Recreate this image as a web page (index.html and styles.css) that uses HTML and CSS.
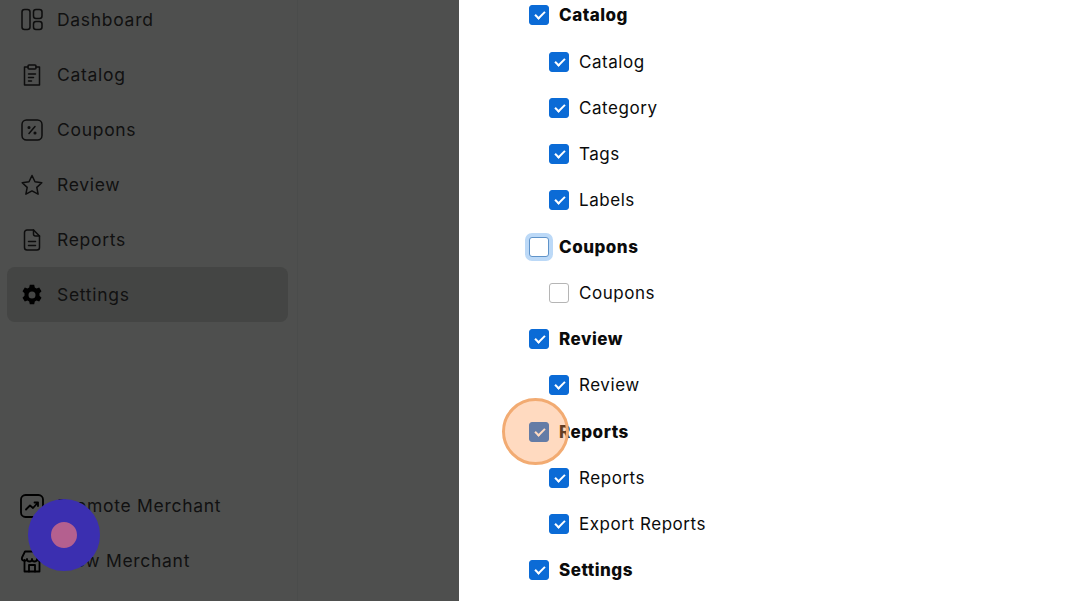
FILE: index.html
```html
<!DOCTYPE html>
<html lang="en">
<head>
  <meta charset="UTF-8" />
  <title>Roles</title>
  <link rel="stylesheet" href="styles.css">
</head>
<body>
  <div class="page">
    <aside class="sidebar">
      <nav class="menu">
        <a class="menu-item">
          <svg class="icon" viewBox="0 0 24 24"><rect x="2" y="1.500" width="8" height="20" rx="2.500"/><rect x="13.500" y="1.500" width="8.500" height="9" rx="2.500"/><rect x="13.500" y="13.500" width="8.500" height="8" rx="2.500"/></svg>
          Dashboard
        </a>
        <a class="menu-item">
          <svg class="icon" viewBox="0 0 24 24"><path d="M8 4H4.500v18h15V4H16"/><rect x="8" y="2" width="8" height="4" rx="1"/><path d="M8.500 11h7M8.500 14.500h5M8.500 18h3"/></svg>
          Catalog
        </a>
        <a class="menu-item">
          <svg class="icon" viewBox="0 0 24 24"><rect x="2" y="2" width="20" height="20" rx="4.500"/><path d="M9 15.500l6-7"/><circle cx="9" cy="9.500" r="0.800"/><circle cx="15" cy="15" r="0.800"/></svg>
          Coupons
        </a>
        <a class="menu-item">
          <svg class="icon" viewBox="0 0 24 24"><path d="M12 2.500l3 6.300 6.800.9-5 4.700 1.300 6.800-6.100-3.300-6.100 3.300 1.300-6.800-5-4.700 6.800-.9z"/></svg>
          Review
        </a>
        <a class="menu-item">
          <svg class="icon" viewBox="0 0 24 24"><path d="M13.500 2H7a2.500 2.500 0 0 0-2.500 2.500v15A2.500 2.500 0 0 0 7 22h10a2.500 2.500 0 0 0 2.500-2.500V8z"/><path d="M13.500 2v4a2 2 0 0 0 2 2h4M8.500 13.500h7M8.500 17.500h7"/></svg>
          Reports
        </a>
        <a class="menu-item active">
          <svg class="icon icon-solid" viewBox="0 0 24 24"><path fill-rule="evenodd" d="M14.200 1.700l.6 2.700 1.700 1 2.700-.8 2.300 3.700-2 1.900v2.600l2 1.900-2.300 3.700-2.700-.8-1.700 1-.6 2.700H9.800l-.6-2.700-1.700-1-2.700.8-2.300-3.700 2-1.900v-2.600l-2-1.900 2.300-3.700 2.700.8 1.700-1 .6-2.700zM12 8.500a3.500 3.500 0 1 0 0 7 3.500 3.500 0 0 0 0-7z"/></svg>
          Settings
        </a>
      </nav>
      <nav class="menu">
        <a class="menu-item">
          <svg class="icon icon-bold" viewBox="0 0 24 24"><rect x="1" y="1" width="22" height="22" rx="4.500"/><path d="M6 15.500l4-4 3 2.500 5-5.500M14.500 8.500H18V12"/></svg>
          Promote Merchant
        </a>
        <a class="menu-item">
          <svg class="icon icon-bold" viewBox="0 0 24 24"><path d="M4.500 11v11.500h15V11"/><path d="M5 2.500h14l3 6a2.500 2.500 0 0 1-5 1.500 2.500 2.500 0 0 1-5 0 2.500 2.500 0 0 1-5 0 2.500 2.500 0 0 1-5-1.500z"/><path d="M9 22.500V16h6v6.500"/></svg>
          View Merchant
        </a>
      </nav>
    </aside>
    <div class="scrim"></div>

    <main class="content">
      <ul class="perms">
        <li class="perm parent"><span class="box on"></span>Catalog</li>
        <li class="perm child"><span class="box on"></span>Catalog</li>
        <li class="perm child"><span class="box on"></span>Category</li>
        <li class="perm child"><span class="box on"></span>Tags</li>
        <li class="perm child"><span class="box on"></span>Labels</li>
        <li class="perm parent"><span class="box focus"></span>Coupons</li>
        <li class="perm child"><span class="box"></span>Coupons</li>
        <li class="perm parent"><span class="box on"></span>Review</li>
        <li class="perm child"><span class="box on"></span>Review</li>
        <li class="perm parent"><span class="box on"></span>Reports</li>
        <li class="perm child"><span class="box on"></span>Reports</li>
        <li class="perm child"><span class="box on"></span>Export Reports</li>
        <li class="perm parent"><span class="box on"></span>Settings</li>
      </ul>
    </main>
  </div>

  <div class="click-ring"></div>
  <div class="cursor-dot"></div>
</body>
</html>
```

FILE: styles.css
```css
* {
  box-sizing: border-box;
  margin: 0;
  padding: 0;
}

html, body {
  height: 100%;
  overflow: hidden;
}

body {
  font-family: 'Inter', 'Liberation Sans', sans-serif;
  background-color: #fff;
  color: #0b0b0b;
}

.page {
  display: flex;
  height: 601px;
}

.sidebar {
  flex: 0 0 298px;
  display: flex;
  flex-direction: column;
  justify-content: space-between;
  padding: 0 9px 13px 7px;
  background-color: #4e4f4e;
  border-right: 1px solid #4a4c4b;
  overflow: hidden;
}

.scrim {
  flex: 0 0 161px;
  background-color: #4e4f4e;
}

.menu {
  display: flex;
  flex-direction: column;
}

.menu:first-child {
  margin-top: -8px;
}

.menu-item {
  display: flex;
  align-items: center;
  gap: 13px;
  height: 55px;
  padding-left: 13px;
  border-radius: 8px;
  font-size: 17.5px;
  letter-spacing: 0.7px;
  color: #111;
}

.menu-item.active {
  background-color: #444544;
}

.icon {
  flex: none;
  width: 24px;
  height: 24px;
  fill: none;
  stroke: #0d0d0d;
  stroke-width: 1.5;
  stroke-linecap: round;
  stroke-linejoin: round;
}

.icon-bold {
  stroke: #000;
  stroke-width: 1.8;
}

.icon-solid {
  fill: #000;
  stroke: none;
}

.content {
  flex: 1;
  padding-left: 70px;
}

.perms {
  list-style: none;
  margin-top: -7.725px;
}

.perm {
  display: flex;
  align-items: center;
  height: 46.25px;
  font-size: 17px;
}

.parent {
  gap: 10px;
  font-weight: 800;
  letter-spacing: 0.5px;
}

.child {
  gap: 10px;
  padding-left: 20px;
  letter-spacing: 0.55px;
}

.box {
  position: relative;
  flex: none;
  width: 20px;
  height: 20px;
  border: 1px solid #b5b5b5;
  border-radius: 3px;
  background-color: #fff;
}

.box.on {
  border-color: #0b6bd6;
  background-color: #0b6bd6;
}

.box.on::after {
  content: "";
  position: absolute;
  left: 5px;
  top: 5px;
  width: 8px;
  height: 4px;
  border-left: 2.500px solid #fff;
  border-bottom: 2.500px solid #fff;
  transform: rotate(-45deg);
}

.box.focus {
  border-color: #5f93c9;
  box-shadow: 0 0 0 4px #bcd9f7;
}

.click-ring {
  position: absolute;
  left: 502px;
  top: 398px;
  width: 67px;
  height: 67px;
  border: 3px solid #f2ab72;
  border-radius: 50%;
  background-color: rgba(255, 155, 85, 0.37);
}

.cursor-dot {
  position: absolute;
  left: 28px;
  top: 499px;
  width: 72px;
  height: 72px;
  border: 23.500px solid #3b2fb0;
  border-radius: 50%;
  background-color: #b4608f;
}
```
